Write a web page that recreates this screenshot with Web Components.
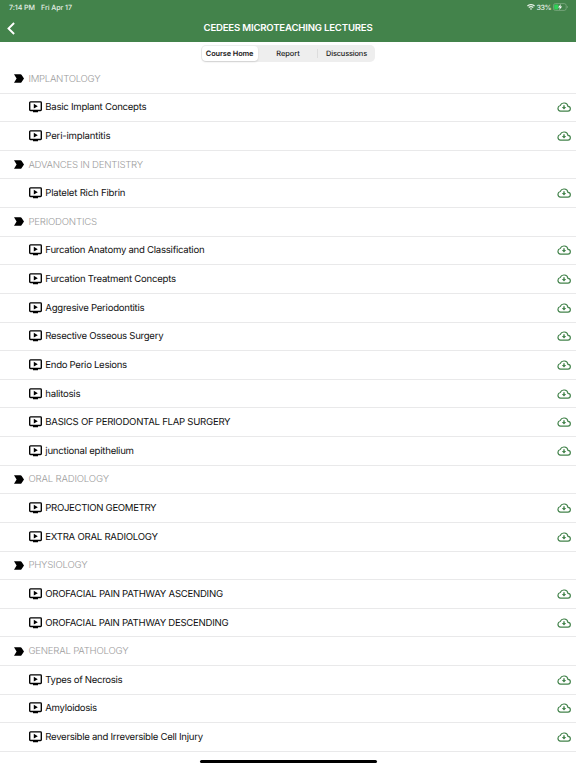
<!DOCTYPE html>
<html lang="en">
<head>
<meta charset="utf-8">
<title>Cedees Microteaching Lectures</title>
<style>
html,body{margin:0;height:100%;background:#fff;overflow:hidden}
body{font-family:Inter,"Liberation Sans",sans-serif;color:#111;text-rendering:geometricPrecision}
</style>
</head>
<body>
<course-app></course-app>
<script>
const define = (name, html, setup) => customElements.define(name, class extends HTMLElement {
  connectedCallback() {
    if (this.shadowRoot) return;
    this.attachShadow({ mode: 'open' }).innerHTML = html;
    if (setup) setup(this, this.shadowRoot);
  }
});

// Label tracked so that its text spans the width given in the "w" attribute.
define('fit-label', `<style>:host{display:inline-block;white-space:nowrap;line-height:14px}</style><span><slot></slot></span>`, (el, root) => {
  const span = root.querySelector('span');
  const w = parseFloat(el.getAttribute('w'));
  const natural = span.getBoundingClientRect().width;
  if (w && natural) span.style.letterSpacing = ((w - natural) / el.textContent.length) + 'px';
});

define('status-bar', `<style>
:host{display:flex;justify-content:space-between;align-items:center;height:14px;padding:0 8px 0 9px;color:#e4efe5;font-size:7.1px;font-weight:500;box-sizing:border-box}
div{display:flex;align-items:center}
.l{gap:6px}.r{gap:2px} svg{display:block}
fit-label{padding-top:1px}
</style>
<div class="l"><fit-label w="26">7:14 PM</fit-label><fit-label w="31">Fri Apr 17</fit-label></div>
<div class="r">
<svg width="8" height="6" viewBox="0 0 8 6" fill="none" stroke="#e4efe5" stroke-width="1.25"><path d="M.4 2.1Q4-.9 7.6 2.1M1.7 3.6Q4 1.7 6.3 3.6"/><path d="M4 6 2.8 4.7Q4 3.8 5.2 4.7Z" fill="#e4efe5" stroke="none"/></svg>
<fit-label w="14.5">33%</fit-label>
<svg width="15" height="8" viewBox="0 0 15 8"><rect x=".4" y=".6" width="12.8" height="6.8" rx="2" fill="none" stroke="#8ab18d" stroke-width=".7"/><path d="M14 3v2q.8-.3.8-1T14 3" fill="#8ab18d"/><rect x="1.2" y="1.4" width="4.2" height="5.2" rx="1" fill="#30d158"/><path d="M7.9.9 5 4.4h1.9L6.2 7.1l3-3.7H7.3z" fill="#fff"/></svg>
</div>`);

define('nav-bar', `<style>
:host{display:grid;grid-template-columns:24px 1fr 24px;height:28px;align-items:center;color:#fff;font-size:9.6px;font-weight:600}
svg{display:block;margin-left:7px}.t{text-align:center;padding-top:1px}
</style>
<svg width="9" height="13" viewBox="0 0 9 13" fill="none" stroke="#fff" stroke-width="1.9"><path d="M7.1 1 1.5 6.5l5.6 5.5"/></svg>
<div class="t"><slot></slot></div>`);

define('segment-control', `<style>
:host{display:grid;grid-template-columns:58px 58px 58px;width:174px;height:17px;background:#eee;border-radius:5px;margin:3px auto 0;font-size:7.4px;font-weight:500;color:#1a1a1a;align-items:center;text-align:center}
.on{height:15px;margin-left:1px;width:56px;background:#fff;border-radius:4px;box-shadow:0 1px 2px #0002;font-weight:600;display:flex;align-items:center;justify-content:center}
.on fit-label{margin-right:.8px}
fit-label{padding-top:.6px}
.last{border-left:1px solid #ddd;height:9px;display:flex;align-items:center;justify-content:center}
</style><div class="on"><fit-label w="47.5">Course Home</fit-label></div><div><fit-label w="23.5">Report</fit-label></div><div class="last"><fit-label w="41">Discussions</fit-label></div>`);

const rowBase = `display:flex;align-items:center;height:28.64px;box-sizing:border-box;border-bottom:1px solid #e9e9ea;font-size:9.6px;`;

define('section-row', `<style>
:host{${rowBase}padding-left:13.5px;color:#9c9c9c;font-weight:300}
svg{display:block;margin-right:4.9px}
fit-label{padding-top:2px}
</style><svg width="10" height="9" viewBox="0 0 10 9"><path d="M0 .2h6.4q.7 0 1.1.5L10 4.5 7.5 8.3q-.4.5-1.1.5H0L2.6 4.5Z"/></svg><fit-label></fit-label>`, fill);

define('lecture-row', `<style>
:host{${rowBase}padding:0 5px 0 29px;color:#111;font-weight:400}
svg{display:block}.tv{margin-right:3.3px}.dl{margin-left:auto}
fit-label{padding-top:2px}
</style>
<svg class="tv" width="13" height="12" viewBox="0 0 13 12"><rect x=".7" y=".9" width="11.6" height="8.6" rx=".8" fill="none" stroke="#000" stroke-width="1.35"/><path d="M4 9.6h5v1.7H4zM4.8 2.8v4.8l4-2.4z"/></svg>
<fit-label></fit-label>
<svg class="dl" width="14" height="10" viewBox="0 0 14 10" fill="none" stroke="#43834b"><path d="M3.5 9.2h7.3a2.45 2.45 0 0 0 .2-4.9A4.1 4.1 0 0 0 3.2 3.5 2.9 2.9 0 0 0 3.5 9.2Z" stroke-width="1.2"/><path d="M7 3.2v3" stroke-width="1.4"/><path d="M4.8 5.1h4.4L7 7.5Z" fill="#43834b" stroke="none"/></svg>`, fill);

function fill(el, root) {
  const old = root.querySelector('fit-label');
  const label = document.createElement('fit-label');
  label.setAttribute('w', el.getAttribute('w') - 0.5);
  label.textContent = el.getAttribute('label');
  old.replaceWith(label);
}

const rows = [
  ['s','IMPLANTOLOGY',72.5],['l','Basic Implant Concepts',101.5],['l','Peri-implantitis',65.5],
  ['s','ADVANCES IN DENTISTRY',115],['l','Platelet Rich Fibrin',80.5],
  ['s','PERIODONTICS',69],['l','Furcation Anatomy and Classification',159.5],['l','Furcation Treatment Concepts',131],
  ['l','Aggresive Periodontitis',99.5],['l','Resective Osseous Surgery',118.5],['l','Endo Perio Lesions',82],
  ['l','halitosis',35.5],['l','BASICS OF PERIODONTAL FLAP SURGERY',185.5],['l','junctional epithelium',89],
  ['s','ORAL RADIOLOGY',81],['l','PROJECTION GEOMETRY',111.5],['l','EXTRA ORAL RADIOLOGY',113],
  ['s','PHYSIOLOGY',59.5],['l','OROFACIAL PAIN PATHWAY ASCENDING',178],['l','OROFACIAL PAIN PATHWAY DESCENDING',183.5],
  ['s','GENERAL PATHOLOGY',100.5],['l','Types of Necrosis',77.5],['l','Amyloidosis',52],
  ['l','Reversible and Irreversible Cell Injury',158]
];

define('course-app', `<style>
:host{display:flex;flex-direction:column;width:576px;height:768px;background:#fff;overflow:hidden}
header{height:42px;background:#43834b;flex:none}
main{padding-top:2.9px}
.home{width:177px;height:3px;border-radius:2px;background:#000;margin:8.2px 0 0 199.5px;flex:none}
</style>
<header><status-bar></status-bar><nav-bar><fit-label w="169">CEDEES MICROTEACHING LECTURES</fit-label></nav-bar></header>
<segment-control></segment-control>
<main>${rows.map(([k, t, w]) => `<${k === 's' ? 'section' : 'lecture'}-row label="${t}" w="${w}"></${k === 's' ? 'section' : 'lecture'}-row>`).join('')}</main>
<div class="home"></div>`);
</script>
</body>
</html>
